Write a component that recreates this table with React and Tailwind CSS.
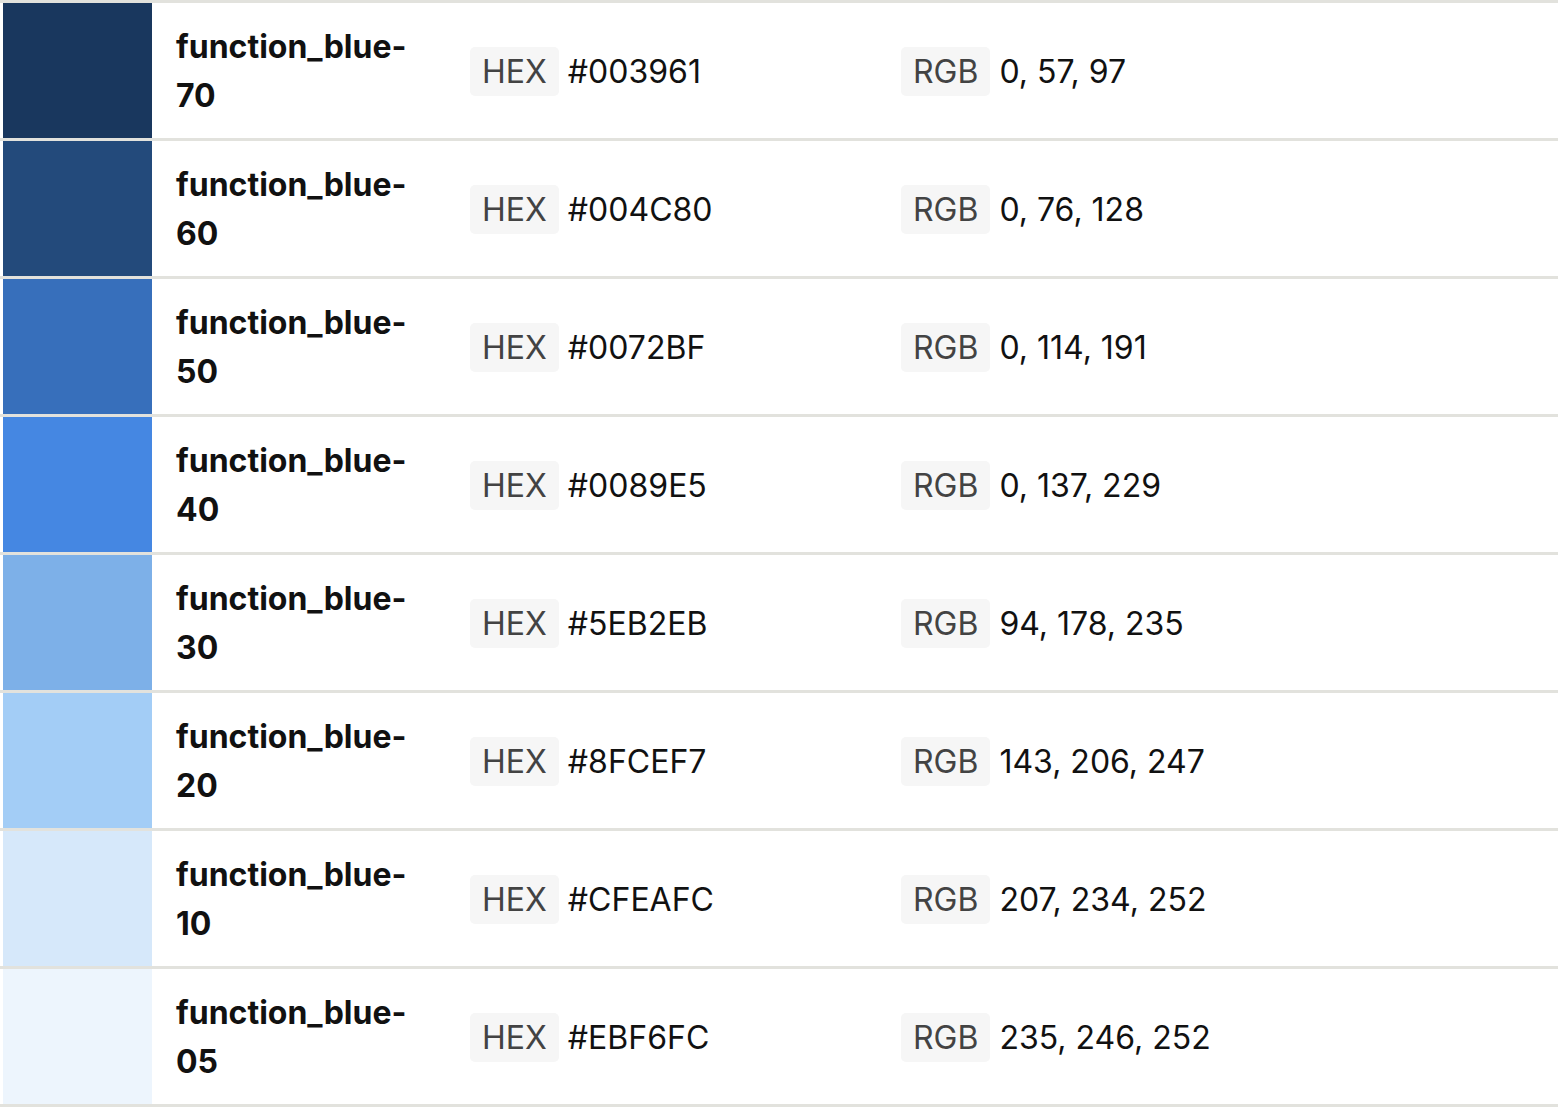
import React from "react";

const colors = [
  { name: "70", swatch: "bg-[#19375e]", hex: "#003961", rgb: "0, 57, 97" },
  { name: "60", swatch: "bg-[#234a7b]", hex: "#004C80", rgb: "0, 76, 128" },
  { name: "50", swatch: "bg-[#376fbb]", hex: "#0072BF", rgb: "0, 114, 191" },
  { name: "40", swatch: "bg-[#4587e2]", hex: "#0089E5", rgb: "0, 137, 229" },
  { name: "30", swatch: "bg-[#7db0e8]", hex: "#5EB2EB", rgb: "94, 178, 235" },
  { name: "20", swatch: "bg-[#a3cdf6]", hex: "#8FCEF7", rgb: "143, 206, 247" },
  { name: "10", swatch: "bg-[#d6e8fa]", hex: "#CFEAFC", rgb: "207, 234, 252" },
  { name: "05", swatch: "bg-[#edf5fd]", hex: "#EBF6FC", rgb: "235, 246, 252" },
];

const Badge = ({ children }) => (
  <span className="flex h-[49px] items-center rounded-[5px] bg-[#f6f6f6] px-[12px] text-[#434343]">
    {children}
  </span>
);

const ColorRow = ({ color }) => (
  <div className="flex h-[138px] border-b-[3px] border-[#e2e2dd]">
    <div className={`ml-[3px] w-[149px] shrink-0 ${color.swatch}`} />
    <div className="flex w-[318px] shrink-0 items-center pl-[24px] pr-[48px]">
      <p className="text-[32px] font-bold leading-[49px] text-[#111]">
        function_blue-{color.name}
      </p>
    </div>
    <div className="flex w-[431px] shrink-0 items-center gap-[9px] pt-[2px]">
      <Badge>HEX</Badge>
      <span className="text-[#111]">{color.hex}</span>
    </div>
    <div className="flex items-center gap-[9px] pt-[2px]">
      <Badge>RGB</Badge>
      <span className="text-[#111]">{color.rgb}</span>
    </div>
  </div>
);

export default function App() {
  return (
    <div
      className="min-h-screen bg-white text-[32px]"
      style={{ fontFamily: "Inter, 'Noto Sans', sans-serif" }}
    >
      <div className="border-t-[3px] border-[#e2e2dd]">
        {colors.map((c) => (
          <ColorRow key={c.name} color={c} />
        ))}
      </div>
    </div>
  );
}
